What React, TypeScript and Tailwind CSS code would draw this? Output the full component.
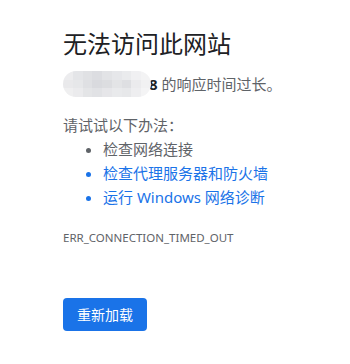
const cjk = "font-['Segoe_UI','Noto_Sans','Noto_Sans_CJK_SC',sans-serif]";

const mosaic = [
  ["#ececee", "#e4e5e8", "#e0e1e4", "#dcdde1", "#e2e3e6", "#e6e7ea", "#eaebed", "#f0f0f2", "#f3f3f4"],
  ["#e9e9eb", "#e6e7e9", "#dfe0e3", "#d9dade", "#dcdde0", "#e3e4e6", "#dedfe2", "#ebebed", "#f1f1f2"],
  ["#efeff0", "#ebebed", "#e4e5e7", "#e1e2e5", "#e6e6e9", "#e9eaec", "#e7e8ea", "#eeeef0", "#f4f4f5"],
];

const BlurredHost = () => (
  <span className="inline-flex flex-col w-[88px] h-[26px] rounded-full overflow-hidden align-middle -mr-[2px] relative z-10">
    {mosaic.map((row, i) => (
      <span key={i} className="flex flex-1">
        {row.map((c, j) => (
          <span key={j} className="flex-1" style={{ backgroundColor: c }} />
        ))}
      </span>
    ))}
  </span>
);

export default function App() {
  return (
    <div className={`min-h-[364px] bg-white pl-[63px] pt-[29px] text-[#5f6368] ${cjk}`}>
      <h1 className="text-[24px] leading-[30px] font-normal text-[#202124]">无法访问此网站</h1>

      <p className="mt-[12px] text-[15px] leading-[24px] flex items-center">
        <BlurredHost />
        <span className="font-bold text-[#202124]">8</span>
        <span>&nbsp;的响应时间过长。</span>
      </p>

      <p className="mt-[16px] text-[15px] leading-[24px]">请试试以下办法：</p>
      <ul className="list-disc pl-[40px] text-[15px] leading-[24px]">
        <li>检查网络连接</li>
        <li className="text-[#1a73e8]">检查代理服务器和防火墙</li>
        <li className="text-[#1a73e8]">运行 Windows 网络诊断</li>
      </ul>

      <div className="mt-[21px] text-[11.5px] leading-[16px] uppercase">ERR_CONNECTION_TIMED_OUT</div>

      <button className="mt-[52px] w-[84px] h-[33px] rounded-[4px] bg-[#1a73e8] text-white text-[14px] flex items-center justify-center">
        重新加载
      </button>
    </div>
  );
}
